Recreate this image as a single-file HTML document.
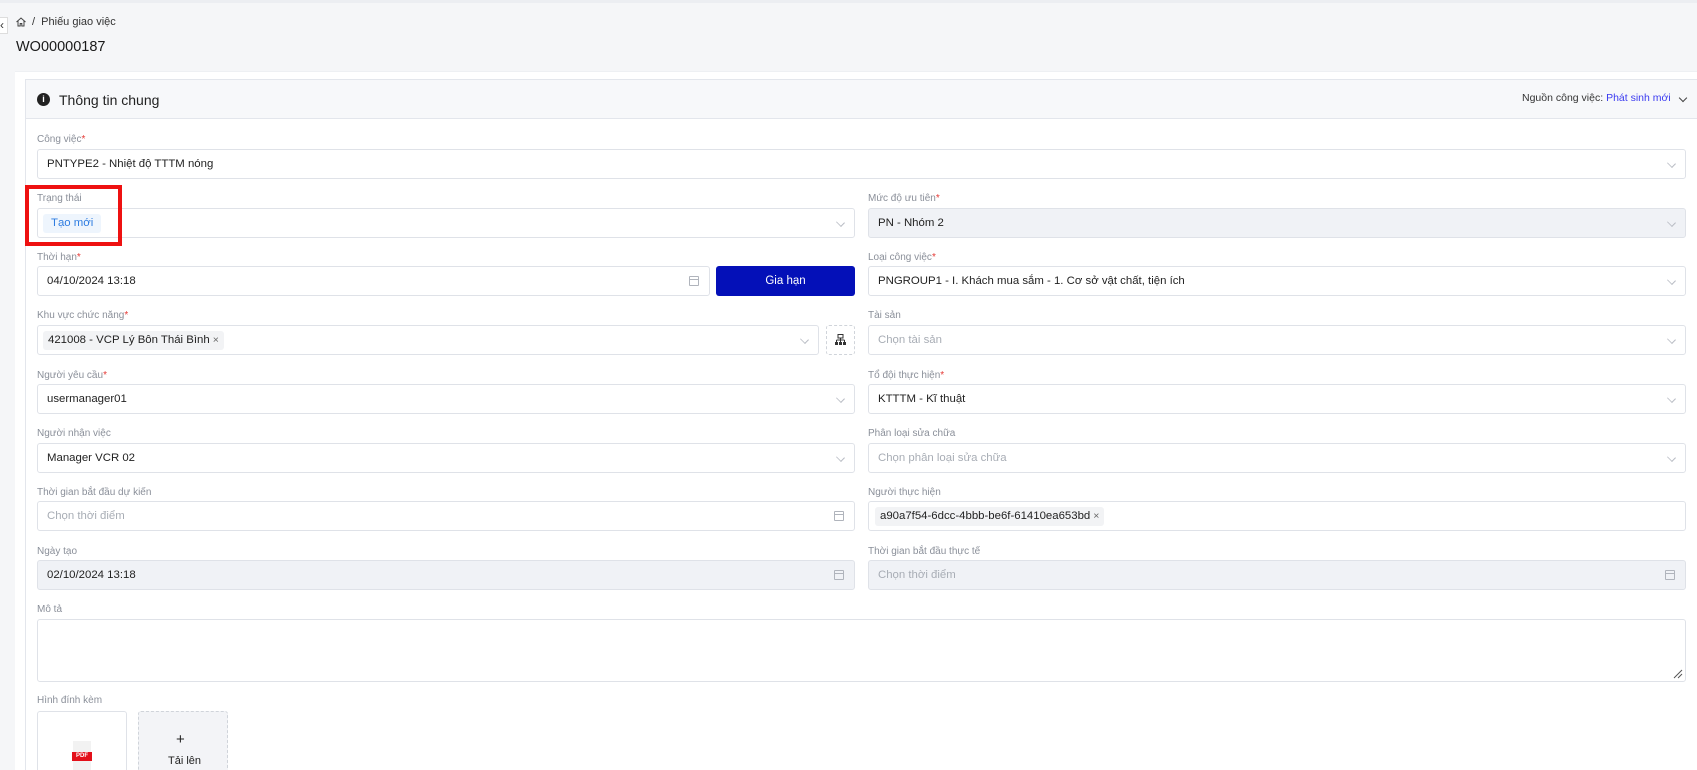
<!DOCTYPE html>
<html><head><meta charset="utf-8"><style>
*{box-sizing:border-box;margin:0;padding:0}
html,body{width:1697px;height:770px;overflow:hidden}
body{background:#f5f6f8;font-family:"Liberation Sans",sans-serif;color:#222;position:relative}
.a{position:absolute}
.lbl{position:absolute;font-size:10px;color:#8a8f99;white-space:nowrap}
.lbl i{color:#e53935;font-style:normal}
.f{position:absolute;height:30px;border:1px solid #dfe2e8;border-radius:3px;background:#fff;font-size:11.4px;line-height:28px;padding-left:9px;white-space:nowrap;color:#222}
.f.d{background:#f0f2f6}
.f .ph{color:#a8adb5}
.chev{position:absolute;right:10px;top:10px;width:7px;height:7px;border-right:1px solid #b8bcc4;border-bottom:1px solid #b8bcc4;transform:rotate(45deg) scaleY(.8)}
.cal{position:absolute;right:10px;top:9px;width:10px;height:10px;border:1px solid #b0b4bc;border-radius:1px}
.cal:before{content:"";position:absolute;left:0;right:0;top:2px;border-top:1px solid #b0b4bc}
.tag{display:inline-block;background:#f2f3f5;border-radius:3px;padding:0 5px;line-height:19px;margin-top:4px;font-size:11.4px}
.tag b{font-weight:normal;color:#666;font-size:10.5px;margin-left:3px}
</style></head><body>
<div class="a" style="left:0;top:0;width:1697px;height:3px;background:#eceef2"></div>
<div class="a" style="left:0;top:17px;width:8px;height:17px;background:#fff;border:1px solid #ddd;border-left:none;font-size:12px;line-height:15px;color:#333">‹</div>
<svg class="a" style="left:15px;top:16px" width="12" height="12" viewBox="0 0 12 12"><path d="M1.5 6L6 2l4.5 4M3 5v5h2.2V7.5h1.6V10H9V5" fill="none" stroke="#444" stroke-width="1"/></svg>
<div class="a" style="left:32px;top:16px;font-size:11px;color:#333">/&nbsp;&nbsp;Phiếu giao việc</div>
<div class="a" style="left:16px;top:39px;font-size:14.5px;color:#1a1a1a">WO00000187</div>
<div class="a" style="left:15px;top:71px;width:1682px;height:720px;background:#fff;border-top:1px solid #eef0f3"></div>
<div class="a" style="left:25px;top:79px;width:1672px;height:720px;border:1px solid #e3e6ec;border-right:none;border-bottom:none"></div>
<div class="a" style="left:26px;top:80px;width:1671px;height:39px;background:#f7f8fa;border-bottom:1px solid #e3e6ec"></div>
<div class="a" style="left:37px;top:93px;width:13px;height:13px;border-radius:50%;background:#222;color:#fff;font-size:9px;font-weight:bold;text-align:center;line-height:13px">i</div>
<div class="a" style="left:59px;top:92px;font-size:14px;color:#222">Thông tin chung</div>
<div class="a" style="left:1522px;top:92px;font-size:10.5px;color:#333">Nguồn công việc: <span style="color:#3b3bf0">Phát sinh mới</span></div>
<div class="a" style="left:1680px;top:95px;width:6px;height:6px;border-right:1px solid #444;border-bottom:1px solid #444;transform:rotate(45deg)"></div>

<div class="lbl" style="left:37px;top:134px">Công việc<i>*</i></div>
<div class="f" style="left:37px;top:149px;width:1649px">PNTYPE2 - Nhiệt độ TTTM nóng<span class="chev"></span></div>

<div class="lbl" style="left:37px;top:193px">Trạng thái</div>
<div class="f" style="left:37px;top:208px;width:818px;padding-left:5px"><span class="tag" style="background:#eef5fd;color:#2f7de1;padding:0 8px">Tạo mới</span><span class="chev"></span></div>
<div class="lbl" style="left:868px;top:193px">Mức độ ưu tiên<i>*</i></div>
<div class="f d" style="left:868px;top:208px;width:818px">PN - Nhóm 2<span class="chev"></span></div>
<div class="a" style="left:25px;top:185px;width:97px;height:61px;border:4px solid #ee1111"></div>

<div class="lbl" style="left:37px;top:252px">Thời hạn<i>*</i></div>
<div class="f" style="left:37px;top:266px;width:673px">04/10/2024 13:18<span class="cal"></span></div>
<div class="a" style="left:716px;top:266px;width:139px;height:30px;background:#0410b8;border-radius:3px;color:#fff;font-size:11.5px;text-align:center;line-height:30px">Gia hạn</div>
<div class="lbl" style="left:868px;top:252px">Loại công việc<i>*</i></div>
<div class="f" style="left:868px;top:266px;width:818px">PNGROUP1 - I. Khách mua sắm - 1. Cơ sở vật chất, tiện ích<span class="chev"></span></div>

<div class="lbl" style="left:37px;top:310px">Khu vực chức năng<i>*</i></div>
<div class="f" style="left:37px;top:325px;width:782px;padding-left:5px"><span class="tag">421008 - VCP Lý Bôn Thái Bình<b>×</b></span><span class="chev"></span></div>
<div class="a" style="left:826px;top:325px;width:29px;height:30px;border:1px dashed #d0d4da;border-radius:3px"></div>
<svg class="a" style="left:835px;top:334px" width="11" height="11" viewBox="0 0 11 11"><rect x="3" y="0.5" width="5" height="3.5" fill="none" stroke="#333"/><path d="M5.5 4v2M1.5 6h8M1.5 6v2M5.5 6v2M9.5 6v2" stroke="#333"/><rect x="0" y="8" width="3" height="3" fill="#333"/><rect x="4" y="8" width="3" height="3" fill="#333"/><rect x="8" y="8" width="3" height="3" fill="#333"/></svg>
<div class="lbl" style="left:868px;top:310px">Tài sản</div>
<div class="f" style="left:868px;top:325px;width:818px"><span class="ph">Chọn tài sản</span><span class="chev"></span></div>

<div class="lbl" style="left:37px;top:370px">Người yêu cầu<i>*</i></div>
<div class="f" style="left:37px;top:384px;width:818px">usermanager01<span class="chev"></span></div>
<div class="lbl" style="left:868px;top:370px">Tổ đội thực hiện<i>*</i></div>
<div class="f" style="left:868px;top:384px;width:818px">KTTTM - Kĩ thuật<span class="chev"></span></div>

<div class="lbl" style="left:37px;top:428px">Người nhận việc</div>
<div class="f" style="left:37px;top:443px;width:818px">Manager VCR 02<span class="chev"></span></div>
<div class="lbl" style="left:868px;top:428px">Phân loại sửa chữa</div>
<div class="f" style="left:868px;top:443px;width:818px"><span class="ph">Chọn phân loại sửa chữa</span><span class="chev"></span></div>

<div class="lbl" style="left:37px;top:487px">Thời gian bắt đầu dự kiến</div>
<div class="f" style="left:37px;top:501px;width:818px"><span class="ph">Chọn thời điểm</span><span class="cal"></span></div>
<div class="lbl" style="left:868px;top:487px">Người thực hiện</div>
<div class="f" style="left:868px;top:501px;width:818px;padding-left:6px"><span class="tag">a90a7f54-6dcc-4bbb-be6f-61410ea653bd<b>×</b></span></div>

<div class="lbl" style="left:37px;top:546px">Ngày tạo</div>
<div class="f d" style="left:37px;top:560px;width:818px">02/10/2024 13:18<span class="cal"></span></div>
<div class="lbl" style="left:868px;top:546px">Thời gian bắt đầu thực tế</div>
<div class="f d" style="left:868px;top:560px;width:818px"><span class="ph">Chọn thời điểm</span><span class="cal"></span></div>

<div class="lbl" style="left:37px;top:604px">Mô tả</div>
<div class="f" style="left:37px;top:619px;width:1649px;height:63px"></div>
<svg class="a" style="left:1673px;top:669px" width="10" height="10"><path d="M1 9L9 1M5 9L9 5" stroke="#555"/></svg>

<div class="lbl" style="left:37px;top:695px">Hình đính kèm</div>
<div class="a" style="left:37px;top:711px;width:90px;height:70px;border:1px solid #dfe2e8;border-radius:3px;background:#fff"></div>
<div class="a" style="left:73px;top:741px;width:18px;height:29px;background:#f2f2f2"></div>
<div class="a" style="left:72px;top:752px;width:20px;height:9px;background:#e3101a;color:#fff;font-size:6px;font-weight:bold;text-align:center;line-height:9px">PDF</div>
<div class="a" style="left:138px;top:711px;width:90px;height:70px;border:1px dashed #d0d4da;border-radius:3px;background:#f3f4f7"></div>
<div class="a" style="left:176px;top:731px;font-size:15px;color:#222">+</div>
<div class="a" style="left:168px;top:755px;font-size:11px;color:#222">Tải lên</div>
</body></html>
